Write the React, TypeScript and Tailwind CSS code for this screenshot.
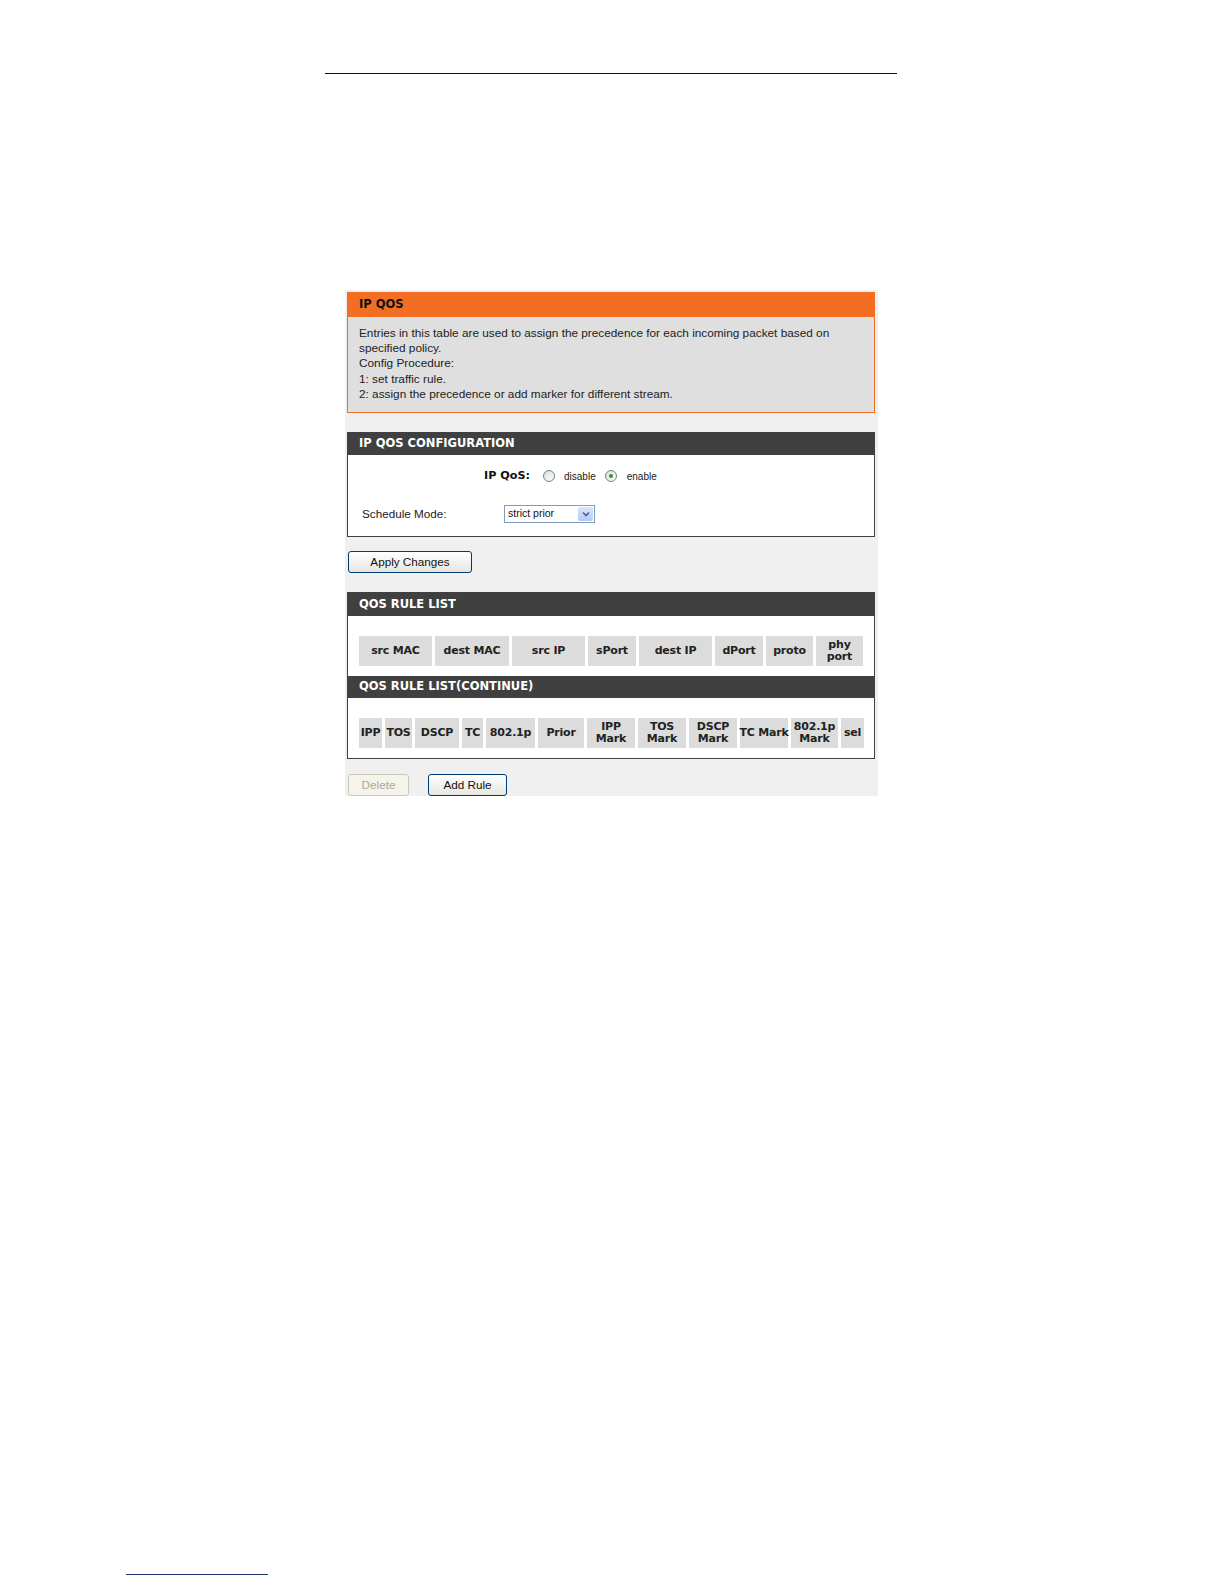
import React from "react";

const body = { fontFamily: '"Liberation Sans", Arial, sans-serif' };
const heavy = { fontFamily: '"DejaVu Sans", Verdana, sans-serif' };

function Header({ title, tone = "dark" }: { title: string; tone?: "dark" | "orange" }) {
  return (
    <div
      className={
        tone === "orange"
          ? "h-[24px] bg-[#f26e22] pl-[11px] flex items-center text-[11.5px] font-bold text-[#111]"
          : "h-[22px] bg-[#404040] pl-[11px] flex items-center text-[11.5px] font-bold text-white"
      }
      style={heavy}
    >
      {title}
    </div>
  );
}

function Radio({ checked }: { checked?: boolean }) {
  return (
    <span className="w-[12px] h-[12px] rounded-full border border-[#6d7f91] bg-gradient-to-br from-[#dcdcd6] to-white flex items-center justify-center">
      {checked && <span className="w-[4px] h-[4px] rounded-full bg-[#21a121]" />}
    </span>
  );
}

function Btn({ label, w, disabled }: { label: string; w: string; disabled?: boolean }) {
  return (
    <div
      className={
        disabled
          ? `${w} h-[22px] rounded-[3px] border border-[#cac8bb] bg-[#f5f4ea] text-[#aca899] text-[11.7px] flex items-center justify-center`
          : `${w} h-[22px] rounded-[3px] border border-[#003c74] bg-gradient-to-b from-white to-[#e6e6e0] text-[#111] text-[11.7px] flex items-center justify-center`
      }
      style={body}
    >
      {label}
    </div>
  );
}

const rules1 = [
  ["src MAC", "w-[73px]"],
  ["dest MAC", "w-[74px]"],
  ["src IP", "w-[73px]"],
  ["sPort", "w-[48px]"],
  ["dest IP", "w-[73px]"],
  ["dPort", "w-[48px]"],
  ["proto", "w-[47px]"],
  ["phy\nport", "w-[47px]"],
];

const rules2 = [
  ["IPP", "w-[23px]"],
  ["TOS", "w-[27px]"],
  ["DSCP", "w-[44px]"],
  ["TC", "w-[21px]"],
  ["802.1p", "w-[49px]"],
  ["Prior", "w-[46px]"],
  ["IPP\nMark", "w-[48px]"],
  ["TOS\nMark", "w-[48px]"],
  ["DSCP\nMark", "w-[48px]"],
  ["TC\u00a0Mark", "w-[48px]"],
  ["802.1p\nMark", "w-[47px]"],
  ["sel", "w-[23px]"],
];

function Cells({ items }: { items: string[][] }) {
  return (
    <div className="flex gap-[3px] h-[30px]">
      {items.map(([t, w]) => (
        <div
          key={t}
          className={`${w} bg-[#dcdcdc] flex items-center justify-center text-center whitespace-pre leading-[12px] text-[11px] font-bold text-[#222] tracking-[-0.2px]`}
          style={heavy}
        >
          {t}
        </div>
      ))}
    </div>
  );
}

export default function App() {
  return (
    <div className="w-full h-[1584px] overflow-hidden bg-white flex flex-col" style={body}>
      <div className="mt-[73px] ml-[325px] w-[572px] h-[1px] bg-[#111]" />

      <div className="mt-[216px] ml-[345px] w-[533px] bg-[#f0f0f0] pt-[2px] pl-[2px] pr-[3px] flex flex-col">
        {/* intro */}
        <div className="border border-[#f26e22] flex flex-col">
          <Header title="IP QOS" tone="orange" />
          <div className="bg-[#dfdfdf] px-[11px] pt-[9px] pb-[10px] text-[11.8px] leading-[15.2px] text-[#222]">
            <div>Entries in this table are used to assign the precedence for each incoming packet based on</div>
            <div>specified policy.</div>
            <div>Config Procedure:</div>
            <div>1: set traffic rule.</div>
            <div>2: assign the precedence or add marker for different stream.</div>
          </div>
        </div>

        {/* configuration */}
        <div className="mt-[19px] border border-[#404040] bg-white flex flex-col">
          <Header title="IP QOS CONFIGURATION" />
          <div className="h-[81px] flex flex-col">
            <div className="mt-[13px] flex items-center h-[16px]">
              <span className="ml-[136px] text-[11.2px] font-bold text-[#111]" style={heavy}>
                IP QoS:
              </span>
              <span className="ml-[13px]"><Radio /></span>
              <span className="ml-[9px] text-[10px] text-[#222]">disable</span>
              <span className="ml-[9px]"><Radio checked /></span>
              <span className="ml-[10px] text-[10px] text-[#222]">enable</span>
            </div>
            <div className="mt-[21px] flex items-center h-[18px]">
              <span className="ml-[14px] w-[142px] text-[11.7px] text-[#222]">Schedule Mode:</span>
              <div className="w-[91px] h-[18px] border border-[#7f9db9] bg-white flex items-center">
                <span className="pl-[3px] flex-1 text-[10.5px] text-[#111]">strict prior</span>
                <span className="w-[15px] h-[14px] mr-[1px] bg-gradient-to-b from-[#dbe6fd] to-[#b4c8f6] rounded-[2px] flex items-center justify-center">
                  <svg width="8" height="6" viewBox="0 0 8 6">
                    <path d="M1 1.5 L4 4.5 L7 1.5" fill="none" stroke="#4d6185" strokeWidth="1.6" />
                  </svg>
                </span>
              </div>
            </div>
          </div>
        </div>

        <div className="mt-[14px] pl-[1px]">
          <Btn label="Apply Changes" w="w-[124px]" />
        </div>

        {/* rule lists */}
        <div className="mt-[19px] border border-[#404040] bg-white flex flex-col">
          <div className="h-[23px] bg-[#404040] pl-[11px] flex items-center text-[11.5px] font-bold text-white" style={heavy}>
            QOS RULE LIST
          </div>
          <div className="pt-[20px] pb-[10px] pl-[11px]">
            <Cells items={rules1} />
          </div>
          <Header title="QOS RULE LIST(CONTINUE)" />
          <div className="pt-[20px] pb-[10px] pl-[11px]">
            <Cells items={rules2} />
          </div>
        </div>

        <div className="mt-[15px] pl-[1px] flex gap-[19px]">
          <Btn label="Delete" w="w-[61px]" disabled />
          <Btn label="Add Rule" w="w-[79px]" />
        </div>
      </div>

      <div className="mt-auto mb-[9px] ml-[126px] w-[142px] h-[1px] bg-[#1f2f6b]" />
    </div>
  );
}
